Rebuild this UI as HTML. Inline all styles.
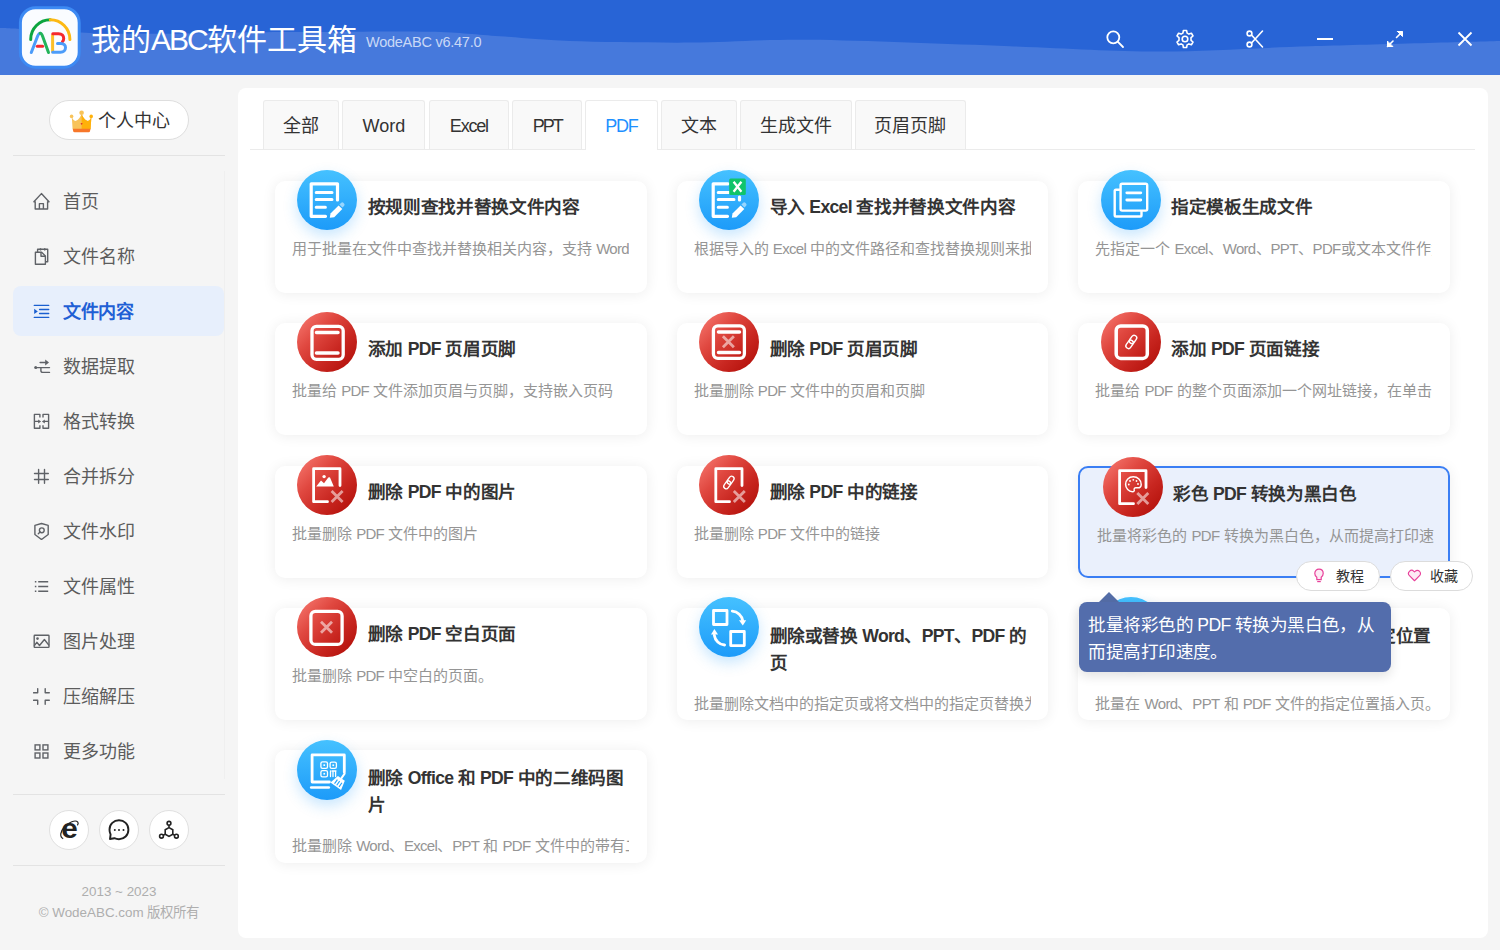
<!DOCTYPE html>
<html lang="zh-CN">
<head>
<meta charset="utf-8">
<style>
*{box-sizing:border-box;margin:0;padding:0}
html,body{width:1500px;height:950px;overflow:hidden}
body{position:relative;background:#f5f5f5;font-family:"Liberation Sans",sans-serif;color:#333}
.abs{position:absolute}
#hdr{position:absolute;left:0;top:0;width:1500px;height:75px}
#title{position:absolute;left:91px;top:20px;font-size:30px;color:#fff;line-height:40px;white-space:nowrap}
#ver{position:absolute;left:366px;top:32px;font-size:14.5px;letter-spacing:-0.25px;color:#c9d8f6;line-height:20px;white-space:nowrap}
.hi{position:absolute;top:29px;width:20px;height:20px}
/* sidebar */
#vip{position:absolute;left:49px;top:100px;width:140px;height:40px;border:1px solid #dedede;border-radius:20px;background:#fff}
#vip span{position:absolute;left:48px;top:9px;font-size:18px;line-height:22px;color:#333}
.hr{position:absolute;left:13px;width:212px;height:1px;background:#e3e3e3}
.mi{position:absolute;left:13px;width:211px;height:50px;border-radius:8px}
.mi.act{background:#e7effc}
.mi span{position:absolute;left:50px;top:15px;font-size:18px;line-height:22px;color:#5c5c5c;white-space:nowrap}
.mi.act span{color:#1f5fd5;font-weight:bold;letter-spacing:-0.5px}
.mi svg{position:absolute;left:20px;top:16px;width:18px;height:18px}
.rb{position:absolute;top:810px;width:40px;height:40px;border-radius:50%;background:#fff;border:1px solid #e0e0e0}
.rb svg{position:absolute;left:9px;top:9px;width:20px;height:20px}
.ft{position:absolute;left:0;width:238px;text-align:center;font-size:13.4px;color:#aeaeae;line-height:18px;white-space:nowrap}
/* main */
#main{position:absolute;left:238px;top:88px;width:1250px;height:850px;background:#fff;border-radius:8px}
.tab{position:absolute;top:100px;height:49px;border:1px solid #ebebeb;border-bottom:none;background:#f9f9f9;font-size:18px;line-height:51px;text-align:center;color:#333;border-radius:3px 3px 0 0}
.tab.act{background:#fff;color:#1e90ff;height:50px}
#tabline{position:absolute;left:250px;top:149px;width:1225px;height:1px;background:#ebebeb}
.card{position:absolute;width:371.8px;height:112.2px;background:#fff;border-radius:10px;box-shadow:0 1px 14px rgba(0,0,0,.075)}
.card .ic{position:absolute;left:22.7px;top:-10.9px;width:60px;height:60px;border-radius:50%}
.card .t{position:absolute;left:93px;top:13px;width:300px;font-size:17.6px;font-weight:bold;line-height:26.7px;color:#333;white-space:nowrap;letter-spacing:-0.35px}
.card.two .t{top:14.8px}
.card .d{position:absolute;left:17.2px;top:57px;width:337px;height:22px;overflow:hidden;white-space:nowrap;font-size:15px;line-height:22px;color:#959595}
.card.two .d{top:84.5px}
.blue{background:linear-gradient(180deg,#45c1ff,#1d9bf9);box-shadow:0 6px 14px rgba(40,160,250,.25)}
.red{background:linear-gradient(135deg,#fa7f76 0%,#e04840 35%,#c82620 65%,#ad0a04 100%)}
.ic svg{position:absolute;left:0;top:0;width:60px;height:60px}
.card.hov{background:#eaf0fc;border:2px solid #3a7ef4;width:371.5px}
.card.hov>*{margin:0}
.pill{position:absolute;top:561.3px;height:29.6px;border:1px solid #dcdcdc;border-radius:15px;background:#fff;font-size:14px;line-height:28.5px;color:#333}
.pill span{position:absolute;left:39px;top:0;white-space:nowrap}
.pill svg{position:absolute;left:16px;top:6px;width:16px;height:16px}
#tip{position:absolute;left:1078.8px;top:602px;width:312px;height:69.5px;background:#536dac;border-radius:8px;color:#fff;font-size:17.6px;letter-spacing:-0.55px;line-height:26.5px;padding:10px 0 0 9.5px;box-shadow:0 4px 12px rgba(0,0,0,.12)}
#tiparr{position:absolute;left:1098.6px;top:591.6px;width:0;height:0;border-left:10.4px solid transparent;border-right:10.4px solid transparent;border-bottom:10.5px solid #556ea8}
.hdi{position:absolute;top:29px;width:20px;height:20px;margin-left:1px}
.lt{letter-spacing:-0.7px}
</style>
</head>
<body>
<!-- HEADER -->
<svg id="hdr" viewBox="0 0 1500 75" preserveAspectRatio="none">
<rect width="1500" height="75" fill="#4679dc"/>
<path d="M0 0H1500V41C1468.3 41.9 1366.7 44.5 1310 46.3C1253.3 48.0 1210.0 51.5 1160 51.5C1110.0 51.5 1068.3 48.2 1010 46.2C951.7 44.2 863.3 40.4 810 39.8C756.7 39.2 730.0 42.4 690 42.6C650.0 42.8 601.7 42.0 570 41C538.3 40.0 523.3 37.8 500 36.3C476.7 34.8 461.7 32.5 430 31.8C398.3 31.1 341.7 31.9 310 32C278.3 32.1 266.7 32.1 240 32.4C213.3 32.7 175.0 33.7 150 33.8C125.0 33.9 111.7 33.8 90 33C68.3 32.2 35.0 29.8 20 29C5.0 28.2 3.3 28.2 0 28Z" fill="#2864d6"/>
</svg>
<div id="title">我的<span style="letter-spacing:-2px">ABC</span>软件工具箱</div>
<div id="ver">WodeABC v6.47.0</div>
<svg class="abs" style="left:14px;top:2px;width:72px;height:72px" viewBox="14 2 72 72">
<rect x="20.4" y="7.7" width="58.8" height="59.5" rx="15" fill="#fafcff" stroke="#3d8af3" stroke-width="3"/>
<g fill="none" stroke-width="3" stroke-linecap="round">
<path d="M30.7 39.4A19.6 19.6 0 0 1 50.3 19.8" stroke="#0ca53f"/>
<path d="M50.3 19.8A19.6 19.6 0 0 1 69.9 39.4" stroke="#fdb913"/>
<path d="M31.3 52.5L37.6 36.2Q38.9 33.3 40.2 33.3" stroke="#4b9cfa"/>
<path d="M40.2 33.3Q41.5 33.3 42.6 36.2L48.5 52.5" stroke="#22b45a"/>
<path d="M37.3 46.3H42.6" stroke="#f5282d"/>
<path d="M52.6 51.5V35" stroke="#fcbf2a"/>
<path d="M52.8 33.7H58.5C62 33.7 63.7 36 63.7 38.5C63.7 39.8 63.2 40.8 62.5 41.7" stroke="#f5282d"/>
<path d="M57.5 43.4H61C63.7 43.4 65.5 45.2 65.5 47.6C65.5 50.2 63.5 52.3 60.5 52.3H52.7" stroke="#4b9cfa"/>
</g>
</svg>
<svg class="hdi" style="left:1104px" viewBox="0 0 20 20" fill="none" stroke="#fff" stroke-width="1.8" stroke-linecap="round"><circle cx="8.3" cy="8.3" r="6"/><path d="M12.7 12.7L18 18"/></svg>
<svg class="hdi" style="left:1174px" viewBox="0 0 20 20" fill="none" stroke="#fff" stroke-width="1.6" stroke-linejoin="round"><path d="M8.4 1.5H11.6L12.1 4.1L13.9 5.1L16.4 4.2L18 7L16 8.7V11.3L18 13L16.4 15.8L13.9 14.9L12.1 15.9L11.6 18.5H8.4L7.9 15.9L6.1 14.9L3.6 15.8L2 13L4 11.3V8.7L2 7L3.6 4.2L6.1 5.1L7.9 4.1Z"/><circle cx="10" cy="10" r="2.8"/></svg>
<svg class="hdi" style="left:1244px" viewBox="0 0 20 20" fill="none" stroke="#fff" stroke-width="1.6" stroke-linecap="round"><circle cx="4.5" cy="4.5" r="2.4"/><circle cx="4.5" cy="15.5" r="2.4"/><path d="M6.5 6L17.5 18M6.5 14L17.5 2"/></svg>
<svg class="hdi" style="left:1314px" viewBox="0 0 20 20" fill="none" stroke="#fff" stroke-width="2"><path d="M2 10H18"/></svg>
<svg class="hdi" style="left:1384px" viewBox="0 0 20 20" fill="none" stroke="#fff" stroke-width="1.6" stroke-linecap="round"><path d="M11.5 8.5L17 3M2.5 17.5L8 12"/><path d="M12.5 2.5H17.5V7.5L12.5 2.5Z" fill="#fff" stroke-width="1"/><path d="M2.5 12.5V17.5H7.5Z" fill="#fff" stroke-width="1"/></svg>
<svg class="hdi" style="left:1454px" viewBox="0 0 20 20" fill="none" stroke="#fff" stroke-width="1.8"><path d="M3.5 3.5L16.5 16.5M16.5 3.5L3.5 16.5"/></svg>

<!-- SIDEBAR -->
<div id="vip"><span>个人中心</span></div>
<div class="hr" style="top:155px"></div>
<svg class="abs" style="left:69px;top:110px;width:25px;height:23px" viewBox="69 110 25 23">
<path d="M71.8 116.8Q73.5 121.6 76 120.8Q79.2 119.6 81.6 114Q84 119.6 87.2 120.8Q89.7 121.6 91.4 116.8L90.6 129.2H72.6Z" fill="#f8c35a"/>
<path d="M81.6 114Q84 119.6 87.2 120.8Q89.7 121.6 91.4 116.8L90.6 129.2H81.6Z" fill="#ffb10a"/>
<path d="M72.8 128.8H90.4L90 131.2Q89.8 132.2 88.6 132.2H74.6Q73.4 132.2 73.2 131.2Z" fill="#f7772a"/>
<circle cx="71.6" cy="116.4" r="1.8" fill="#f8c35a"/><circle cx="81.6" cy="112.8" r="2.3" fill="#f8c35a"/><circle cx="91.2" cy="116.4" r="1.8" fill="#ffb10a"/>
<path d="M80.6 123.2Q81.6 122.6 82.6 123.2Q82.4 124.4 81.6 124.8Q80.8 124.4 80.6 123.2Z" fill="#e0322a"/>
</svg>
<div class="abs" style="left:224px;top:171px;width:1px;height:608px;background:#efefef"></div>

<div class="mi" style="top:176px"><svg viewBox="0 0 18 18" fill="none" stroke="#5f6267" stroke-width="1.4" stroke-linejoin="round"><path d="M2.2 17V9.8H.9L8.4 1.6L16 9.8H14.6V17Z"/><path d="M6.4 17V11.6H10.4V17"/></svg><span>首页</span></div>
<div class="mi" style="top:231px"><svg viewBox="0 0 18 18" fill="none" stroke="#5f6267" stroke-width="1.4" stroke-width="1.3" stroke-linejoin="round"><path d="M2.4 5.3H8.6L12.4 8.9V17.2H2.4Z"/><path d="M8 5.5V9.2H12.2"/><path d="M4.6 5.2V2.3H14.7V14.7H12.6"/><path d="M7.5 1.2V3.6M11.7 1.2V3.6"/></svg><span>文件名称</span></div>
<div class="mi act" style="top:286px"><svg viewBox="0 0 18 18" fill="none" stroke="#1a5fd0" stroke-width="1.4" stroke-linecap="round"><path d="M1.3 3.4H15.7M6.6 7.5H15.7M6.6 11.5H15.7M1.3 15.4H15.7"/><path d="M1.2 6.7V11.9L4.8 9.4Z" fill="#1a5fd0" stroke="none"/></svg><span>文件内容</span></div>
<div class="mi" style="top:341px"><svg viewBox="0 0 18 18" fill="none" stroke="#5f6267" stroke-width="1.4" stroke-linecap="round"><circle cx="2.7" cy="10.6" r="1.5" fill="#5f6267" stroke="none"/><path d="M2.7 10.6H16.5M7.9 10.6V13.4Q7.9 15.4 9.9 15.4H16.5M7.1 5.45H13"/><path d="M12.2 2.5V8.4L16 5.45Z" fill="#5f6267" stroke="none"/></svg><span>数据提取</span></div>
<div class="mi" style="top:396px"><svg viewBox="0 0 18 18" fill="none" stroke="#5f6267" stroke-width="1.4" stroke-linejoin="round"><path d="M6.9 5.45V2.4H1.4V16.3H6.9V13.3M10 5.45V2.4H15.6V16.3H10V13.3M1.4 9.4H6M15.6 9.4H11"/><path d="M5.2 7.4V11.4L8.1 9.4Z M11.8 7.4V11.4L8.9 9.4Z" fill="#5f6267" stroke="none"/></svg><span>格式转换</span></div>
<div class="mi" style="top:451px"><svg viewBox="0 0 18 18" fill="none" stroke="#5f6267" stroke-width="1.4" stroke-linecap="round"><path d="M5.6 2.5V16.2M11.5 2.5V16.2M1.5 6.5H15.3M1.5 12.5H15.3"/></svg><span>合并拆分</span></div>
<div class="mi" style="top:506px"><svg viewBox="0 0 18 18" fill="none" stroke="#5f6267" stroke-width="1.4" stroke-width="1.5" stroke-linejoin="round"><path d="M8.5 1.5L15.2 3.4V12.5L8.5 17.5L1.9 12.5V3.4Z"/><circle cx="8.8" cy="8.3" r="2.4"/><path d="M7.1 10L5.3 11.7" stroke-linecap="round"/></svg><span>文件水印</span></div>
<div class="mi" style="top:561px"><svg viewBox="0 0 18 18" fill="none" stroke="#5f6267" stroke-width="1.4" stroke-width="1.3"><path d="M5.2 4.7H15.2M5.2 9.5H15.2M5.2 14.2H15.2"/><path d="M2.6 4V5.4M2.6 8.8V10.2M2.6 13.5V14.9" stroke-width="1.5"/></svg><span>文件属性</span></div>
<div class="mi" style="top:616px"><svg viewBox="0 0 18 18" fill="none" stroke="#5f6267" stroke-width="1.4" stroke-linejoin="round"><rect x="1.2" y="3.3" width="14.8" height="12.1" rx=".6"/><path d="M1.2 13.8L3.8 10.3L6.5 13.5L11.4 7.5L16 13.4"/><circle cx="4.5" cy="6.6" r="1.3" fill="#5f6267" stroke="none"/></svg><span>图片处理</span></div>
<div class="mi" style="top:671px"><svg viewBox="0 0 18 18" fill="none" stroke="#5f6267" stroke-width="1.4" stroke-width="1.6" stroke-linejoin="round" stroke-linecap="round"><path d="M4.7 1.6V5.7H.6M12.2 1.6V5.7H16.3M.6 13.2H4.7V17.3M16.3 13.2H12.2V17.3"/></svg><span>压缩解压</span></div>
<div class="mi" style="top:726px"><svg viewBox="0 0 18 18" fill="none" stroke="#5f6267" stroke-width="1.4" stroke-width="1.5"><rect x="2.1" y="2.9" width="4.8" height="5"/><rect x="10" y="2.9" width="4.9" height="5"/><rect x="2.1" y="11" width="4.8" height="5"/><rect x="10" y="11" width="4.9" height="5"/></svg><span>更多功能</span></div>
<div class="hr" style="top:794px"></div>
<div class="rb" style="left:49px"></div>
<div class="rb" style="left:99px"></div>
<div class="rb" style="left:149px"></div>
<svg class="abs" style="left:49px;top:810px;width:140px;height:40px" viewBox="49 810 140 40">
<path d="M63.2 838.6C59.6 837.2 59.8 831.5 64.8 826.3C68.5 822.5 75.5 819.2 77.8 822.2C78.4 823 78.2 824.2 77.4 825.4" fill="none" stroke="#222" stroke-width="1.2"/>
<text x="0" y="0" font-family="Liberation Sans" font-weight="bold" font-size="28" fill="#222" transform="translate(61.3 837.7) scale(1.06 1)">e</text>
<path d="M110 839L110.6 834.5C109.9 833.1 109.5 831.4 109.5 829.7C109.5 824.2 113.8 820.3 119 820.3C124.2 820.3 128.4 824.2 128.4 829.7C128.4 835.2 124.2 839.2 119 839.2C117.2 839.2 115.7 838.8 114.3 838.2Z" fill="none" stroke="#222" stroke-width="1.9" stroke-linejoin="round"/>
<circle cx="114.8" cy="829.9" r="1" fill="#222"/><circle cx="119" cy="829.9" r="1" fill="#222"/><circle cx="123.5" cy="829.9" r="1" fill="#222"/>
<g fill="none" stroke="#222" stroke-width="1.6"><circle cx="169" cy="823.3" r="1.9"/><circle cx="161.5" cy="836.2" r="1.9"/><circle cx="176.4" cy="836.2" r="1.9"/>
<path d="M169 827.6L172.8 829.8V834.2L169 836.4L165.2 834.2V829.8Z M169 825.2V827.6 M165.2 834.2L163.2 835.2 M172.8 834.2L174.7 835.2"/></g>
</svg>
<div class="hr" style="top:865px"></div>
<div class="ft" style="top:883px">2013 ~ 2023</div>
<div class="ft" style="top:904px">© WodeABC.com 版权所有</div>

<!-- MAIN -->
<div id="main"></div>
<div id="tabline"></div>
<div class="tab" style="left:263.3px;width:76px">全部</div>
<div class="tab" style="left:342.3px;width:83.2px">Word</div>
<div class="tab" style="left:429px;width:79.7px"><span style="letter-spacing:-1.2px;margin-right:0px">Excel</span></div>
<div class="tab" style="left:512px;width:69.5px"><span style="letter-spacing:-2px;margin-right:-1px">PPT</span></div>
<div class="tab act" style="left:585.3px;width:72.3px"><span style="letter-spacing:-1.2px;margin-right:0px">PDF</span></div>
<div class="tab" style="left:660.5px;width:76px">文本</div>
<div class="tab" style="left:740px;width:111.5px">生成文件</div>
<div class="tab" style="left:854.7px;width:111px">页眉页脚</div>
<!-- CARDS -->
<div class="card" style="left:274.8px;top:180.8px"><div class="ic blue"><svg viewBox="0 0 60 60"><path d="M28.5 46.3H14.2V13.8H40.5V30" fill="none" stroke="#fff" stroke-linecap="round" stroke-linejoin="round" stroke-width="3.2"/><path d="M19.2 22.5H35M19.2 29.5H35M19.2 37.2H28.4" fill="none" stroke="#fff" stroke-linecap="round" stroke-linejoin="round" stroke-width="3"/><path d="M32.8 47.7L33.5 43.5L41.6 35.4L45.3 39.1L37.2 47.2Z" fill="#fff"/><path d="M42.4 34.6L44 33Q45.3 31.7 46.6 33L47 33.4Q48.3 34.7 47 36L45.4 37.6Z" fill="#fff" fill-opacity=".5"/></svg></div><div class="t">按规则查找并替换文件内容</div><div class="d">用于批量在文件中查找并替换相关内容，支持 <span class="lt">Word</span>、<span class="lt">Excel</span>、<span class="lt">PPT</span>、<span class="lt">PDF</span></div></div>
<div class="card" style="left:676.5px;top:180.8px"><div class="ic blue"><svg viewBox="0 0 60 60"><path d="M28.5 46.3H14.2V13.8H29M40.5 27V30" fill="none" stroke="#fff" stroke-linecap="round" stroke-linejoin="round" stroke-width="3.2"/><path d="M19.2 22.5H30M19.2 29.5H35M19.2 37.2H28.4" fill="none" stroke="#fff" stroke-linecap="round" stroke-linejoin="round" stroke-width="3"/><path d="M32.8 47.7L33.5 43.5L41.6 35.4L45.3 39.1L37.2 47.2Z" fill="#fff"/><path d="M42.4 34.6L44 33Q45.3 31.7 46.6 33L47 33.4Q48.3 34.7 47 36L45.4 37.6Z" fill="#fff" fill-opacity=".5"/><rect x="30.2" y="8.5" width="16.6" height="16.5" rx="1.5" fill="#10c46a"/><path d="M34.6 11.8L42.4 21.8M42.4 11.8L34.6 21.8" stroke="#fff" stroke-width="2.3" fill="none"/></svg></div><div class="t">导入 <span class="lt">Excel</span> 查找并替换文件内容</div><div class="d">根据导入的 <span class="lt">Excel</span> 中的文件路径和查找替换规则来批量</div></div>
<div class="card" style="left:1078.2px;top:180.8px"><div class="ic blue"><svg viewBox="0 0 60 60"><path d="M18.4 19.8H15Q13.7 19.8 13.7 21.1V45.2Q13.7 46.5 15 46.5H39.2Q40.5 46.5 40.5 45.2V41.8" fill="none" stroke="#fff" stroke-linecap="round" stroke-linejoin="round" stroke-width="2.4"/><rect x="19.6" y="13.7" width="26.6" height="26.9" rx="1.5" fill="none" stroke="#fff" stroke-linecap="round" stroke-linejoin="round" stroke-width="2.4"/><path d="M25.8 22.8H39.8M25.8 30H39.8" fill="none" stroke="#fff" stroke-linecap="round" stroke-linejoin="round" stroke-width="2.8"/></svg></div><div class="t">指定模板生成文件</div><div class="d">先指定一个 <span class="lt">Excel</span>、<span class="lt">Word</span>、<span class="lt">PPT</span>、<span class="lt">PDF</span>或文本文件作为</div></div>
<div class="card" style="left:274.8px;top:323.2px"><div class="ic red"><svg viewBox="0 0 60 60"><rect x="15" y="14.3" width="31.2" height="33" rx="4.5" fill="none" stroke="#fff" stroke-linecap="round" stroke-linejoin="round" stroke-width="3.3"/><path d="M19.5 20.5H41M19.5 41H41" fill="none" stroke="#fff" stroke-linecap="round" stroke-linejoin="round" stroke-width="3.5"/></svg></div><div class="t">添加 <span class="lt">PDF</span> 页眉页脚</div><div class="d">批量给 <span class="lt">PDF</span> 文件添加页眉与页脚，支持嵌入页码</div></div>
<div class="card" style="left:676.5px;top:323.2px"><div class="ic red"><svg viewBox="0 0 60 60"><rect x="14.4" y="13.9" width="31" height="32.4" rx="4.5" fill="none" stroke="#fff" stroke-linecap="round" stroke-linejoin="round" stroke-width="3.3"/><path d="M19.5 20H40.5M19.5 40.6H40.5" fill="none" stroke="#fff" stroke-linecap="round" stroke-linejoin="round" stroke-width="3.5"/><path d="M23.9 24.3L34.9 35.3M34.9 24.3L23.9 35.3" fill="none" stroke="#fff" stroke-width="2.8" stroke-opacity=".55"/></svg></div><div class="t">删除 <span class="lt">PDF</span> 页眉页脚</div><div class="d">批量删除 <span class="lt">PDF</span> 文件中的页眉和页脚</div></div>
<div class="card" style="left:1078.2px;top:323.2px"><div class="ic red"><svg viewBox="0 0 60 60"><rect x="15.2" y="13.9" width="31.1" height="32.5" rx="4.5" fill="none" stroke="#fff" stroke-linecap="round" stroke-linejoin="round" stroke-width="3.5"/><g transform="translate(30.3 29.9) rotate(35) scale(1)" fill="none" stroke="#fff" stroke-linecap="round" stroke-linejoin="round" stroke-width="1.4"><rect x="-2.6" y="-7.5" width="5.2" height="9" rx="2.6"/><rect x="-2.6" y="-1.5" width="5.2" height="9" rx="2.6"/></g></svg></div><div class="t">添加 <span class="lt">PDF</span> 页面链接</div><div class="d">批量给 <span class="lt">PDF</span> 的整个页面添加一个网址链接，在单击</div></div>
<div class="card" style="left:274.8px;top:465.6px"><div class="ic red"><svg viewBox="0 0 60 60"><path d="M30.5 46.7H16.6V13.7H43V30.5" fill="none" stroke="#fff" stroke-linecap="round" stroke-linejoin="round" stroke-width="2.8"/><circle cx="27.1" cy="21.6" r="1.7" fill="#fff"/><path d="M19.2 31.4L24 25.5L27 28.2L31.3 22.6Q32.3 21.8 33 22.6L36.8 31.4Z" fill="#fff"/><path d="M34.6 36.1L45.6 47.1M45.6 36.1L34.6 47.1" fill="none" stroke="#fff" stroke-width="2.8" stroke-opacity=".55"/></svg></div><div class="t">删除 <span class="lt">PDF</span> 中的图片</div><div class="d">批量删除 <span class="lt">PDF</span> 文件中的图片</div></div>
<div class="card" style="left:676.5px;top:465.6px"><div class="ic red"><svg viewBox="0 0 60 60"><path d="M30.5 46.7H16.8V13.7H43V30.5" fill="none" stroke="#fff" stroke-linecap="round" stroke-linejoin="round" stroke-width="2.8"/><g transform="translate(29.9 27.5) rotate(35) scale(0.95)" fill="none" stroke="#fff" stroke-linecap="round" stroke-linejoin="round" stroke-width="1.4"><rect x="-2.6" y="-7.5" width="5.2" height="9" rx="2.6"/><rect x="-2.6" y="-1.5" width="5.2" height="9" rx="2.6"/></g><path d="M34.8 35.9L45.8 46.9M45.8 35.9L34.8 46.9" fill="none" stroke="#fff" stroke-width="2.8" stroke-opacity=".55"/></svg></div><div class="t">删除 <span class="lt">PDF</span> 中的链接</div><div class="d">批量删除 <span class="lt">PDF</span> 文件中的链接</div></div>
<div class="card hov" style="left:1078.2px;top:465.6px"><div class="ic red"><svg viewBox="0 0 60 60"><path d="M30.5 46.7H16.6V13.7H43V30.5" fill="none" stroke="#fff" stroke-linecap="round" stroke-linejoin="round" stroke-width="2.8"/><path d="M30.3 19.8C25.8 19.8 22.6 23.2 22.6 27.3C22.6 31.4 25.8 34.8 29.5 34.8C31 34.8 31.5 33.8 31.2 32.8C30.9 31.7 31.6 30.8 32.8 30.8H34.8C36.8 30.8 38.2 29.4 38.2 27.4C38.2 23.2 34.7 19.8 30.3 19.8Z" fill="none" stroke="#fff" stroke-linecap="round" stroke-linejoin="round" stroke-width="1.5"/><circle cx="25.8" cy="27.5" r=".9" fill="#fff"/><circle cx="27" cy="24" r=".9" fill="#fff"/><circle cx="30.3" cy="22.8" r=".9" fill="#fff"/><circle cx="33.5" cy="24" r=".9" fill="#fff"/><circle cx="35" cy="27" r=".9" fill="#fff"/><path d="M34.3 35.9L45.3 46.9M45.3 35.9L34.3 46.9" fill="none" stroke="#fff" stroke-width="2.8" stroke-opacity=".55"/></svg></div><div class="t">彩色 <span class="lt">PDF</span> 转换为黑白色</div><div class="d">批量将彩色的 <span class="lt">PDF</span> 转换为黑白色，从而提高打印速度。</div></div>
<div class="card" style="left:274.8px;top:608.0px"><div class="ic red"><svg viewBox="0 0 60 60"><rect x="13.9" y="14.4" width="31.2" height="33" rx="4.5" fill="none" stroke="#fff" stroke-linecap="round" stroke-linejoin="round" stroke-width="3.3"/><path d="M24.0 24.7L35.0 35.7M35.0 24.7L24.0 35.7" fill="none" stroke="#fff" stroke-width="2.8" stroke-opacity=".55"/></svg></div><div class="t">删除 <span class="lt">PDF</span> 空白页面</div><div class="d">批量删除 <span class="lt">PDF</span> 中空白的页面。</div></div>
<div class="card two" style="left:676.5px;top:608.0px"><div class="ic blue"><svg viewBox="0 0 60 60"><rect x="14.5" y="13.5" width="13.5" height="14" fill="none" stroke="#fff" stroke-linecap="round" stroke-linejoin="round" stroke-width="2.8" stroke-linejoin="miter"/><rect x="31.7" y="34.5" width="13.6" height="14.1" fill="none" stroke="#fff" stroke-linecap="round" stroke-linejoin="round" stroke-width="2.8" stroke-linejoin="miter"/><path d="M33.3 14.2C38.6 14.6 43 18.8 43.8 24" fill="none" stroke="#fff" stroke-linecap="round" stroke-linejoin="round" stroke-width="2.8"/><path d="M40 23.2L47.2 23.2L43.8 28.4Z" fill="#fff"/><path d="M25.6 48C20.4 47.6 16 43.4 15.3 38.2" fill="none" stroke="#fff" stroke-linecap="round" stroke-linejoin="round" stroke-width="2.8"/><path d="M12 37.4H19L15.4 32.1Z" fill="#fff"/></svg></div><div class="t">删除或替换 <span class="lt">Word</span>、<span class="lt">PPT</span>、<span class="lt">PDF</span> 的<br>页</div><div class="d">批量删除文档中的指定页或将文档中的指定页替换为</div></div>
<div class="card two" style="left:1078.2px;top:608.0px"><div class="ic blue"><svg viewBox="0 0 60 60"><rect x="14.5" y="13.5" width="13.5" height="14" fill="none" stroke="#fff" stroke-linecap="round" stroke-linejoin="round" stroke-width="2.8" stroke-linejoin="miter"/><rect x="31.7" y="34.5" width="13.6" height="14.1" fill="none" stroke="#fff" stroke-linecap="round" stroke-linejoin="round" stroke-width="2.8" stroke-linejoin="miter"/><path d="M33.3 14.2C38.6 14.6 43 18.8 43.8 24" fill="none" stroke="#fff" stroke-linecap="round" stroke-linejoin="round" stroke-width="2.8"/><path d="M40 23.2L47.2 23.2L43.8 28.4Z" fill="#fff"/><path d="M25.6 48C20.4 47.6 16 43.4 15.3 38.2" fill="none" stroke="#fff" stroke-linecap="round" stroke-linejoin="round" stroke-width="2.8"/><path d="M12 37.4H19L15.4 32.1Z" fill="#fff"/></svg></div><div class="t" style="margin-left:2.5px">在 <span class="lt">Word</span>、<span class="lt">PPT</span>、<span class="lt">PDF</span> 的指定位置<br>插入页</div><div class="d">批量在 <span class="lt">Word</span>、<span class="lt">PPT</span> 和 <span class="lt">PDF</span> 文件的指定位置插入页。</div></div>
<div class="card two" style="left:274.8px;top:750.4px"><div class="ic blue"><svg viewBox="0 0 60 60"><path d="M32.4 42H15.1V14.9H47.3V32.2" fill="none" stroke="#fff" stroke-linecap="round" stroke-linejoin="round" stroke-width="2.8"/><path d="M14.2 47.5H31.8" fill="none" stroke="#fff" stroke-linecap="round" stroke-linejoin="round" stroke-width="2.6"/><g fill="none" stroke="#fff" stroke-linecap="round" stroke-linejoin="round" stroke-width="1.3"><rect x="23.9" y="21.9" width="6.6" height="6.4" rx="1.6"/><rect x="33.1" y="22.2" width="6.3" height="6.1" rx="1.6"/><rect x="23.9" y="30.6" width="6.6" height="6.2" rx="1.6"/><path d="M33.5 30.8V36.5M36 30.8V36.5M38.6 30.8V36.5M35 31H39"/></g><g fill="#fff"><rect x="26.4" y="24.3" width="1.7" height="1.7"/><rect x="35.4" y="24.4" width="1.7" height="1.7"/><rect x="26.4" y="32.9" width="1.7" height="1.7"/></g><g transform="translate(43 42) rotate(35)"><path d="M-1 -9.5V-4" fill="none" stroke="#fff" stroke-linecap="round" stroke-linejoin="round" stroke-width="2"/><path d="M-5.2 -3.8H3.2L5.5 6H-7.5Z" fill="#fff"/><path d="M-3.5 -.5V4.5M-.8 -.5V4.5M2 -.5V4.5" stroke="#1fa2fb" stroke-width="1.1"/></g></svg></div><div class="t">删除 <span class="lt">Office</span> 和 <span class="lt">PDF</span> 中的二维码图<br>片</div><div class="d">批量删除 <span class="lt">Word</span>、<span class="lt">Excel</span>、<span class="lt">PPT</span> 和 <span class="lt">PDF</span> 文件中的带有二维码</div></div>
<!-- /CARDS -->
<!-- OVERLAY -->
<div class="pill" style="left:1296px;width:84px"><svg viewBox="0 0 16 16" fill="none" stroke="#e8409a" stroke-width="1.2" style="left:14px;top:5.5px"><path d="M8 1.2C5.5 1.2 3.8 3.1 3.8 5.5C3.8 7.2 4.7 8.4 5.8 9.2V11.6H10.2V9.2C11.3 8.4 12.2 7.2 12.2 5.5C12.2 3.1 10.5 1.2 8 1.2Z" fill="#fdeaf4"/><path d="M6.2 13.6H9.8"/></svg><span>教程</span></div>
<div class="pill" style="left:1390px;width:83px"><svg viewBox="0 0 16 16" fill="#fdeaf4" stroke="#e8409a" stroke-width="1.2" stroke-linejoin="round" style="left:16px;top:6px;width:15px;height:15px"><path d="M8 13.6L2.6 8.2C1.3 6.9 1.3 4.8 2.6 3.5C3.9 2.2 6 2.2 7.3 3.5L8 4.2L8.7 3.5C10 2.2 12.1 2.2 13.4 3.5C14.7 4.8 14.7 6.9 13.4 8.2Z"/></svg><span>收藏</span></div>
<div id="tiparr"></div>
<div id="tip">批量将彩色的 <span class="lt">PDF</span> 转换为黑白色，从<br>而提高打印速度。</div>
<!-- /OVERLAY -->
</body>
</html>
